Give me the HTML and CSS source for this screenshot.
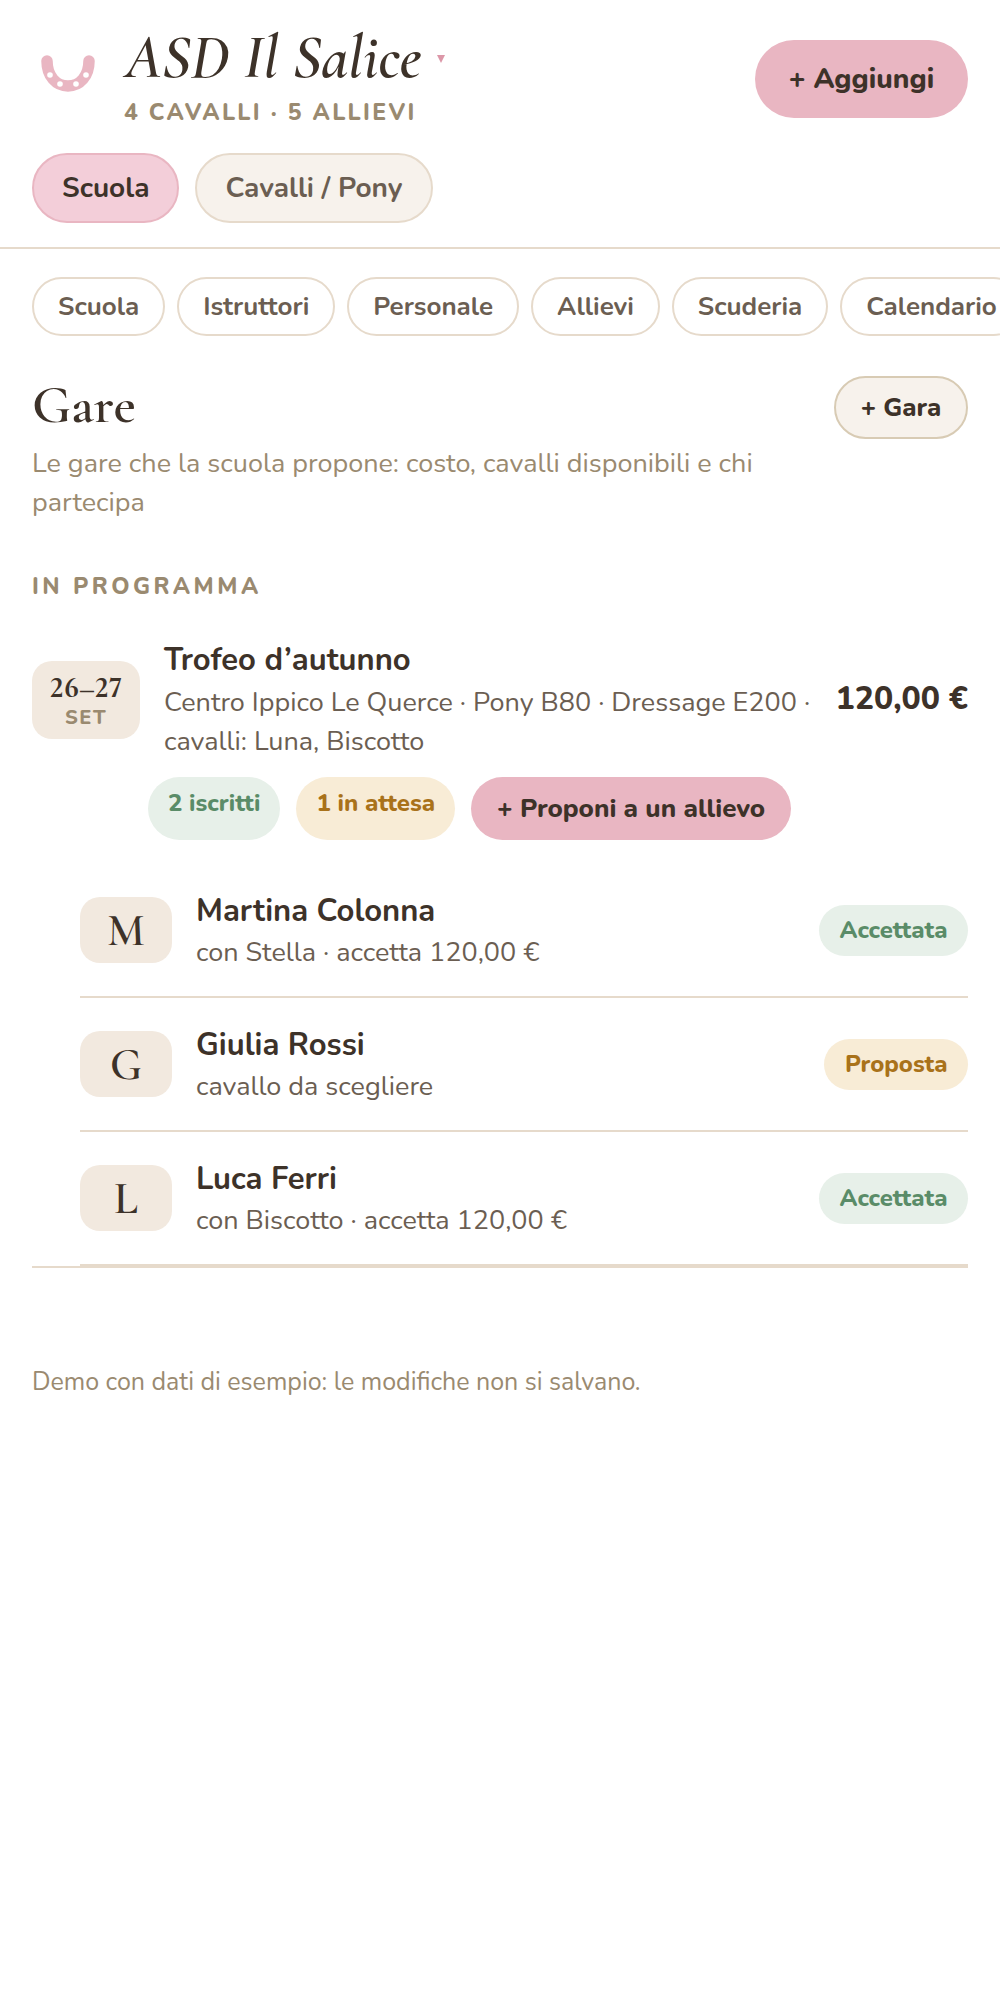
FILE: index.html
```html
<!DOCTYPE html>
<html lang="it">
<head>
<meta charset="utf-8">
<title>ASD Il Salice</title>
<link rel="stylesheet" href="styles.css">
</head>
<body>
<header class="top">
  <div class="top-row">
    <svg class="logo" viewBox="0 0 56 38" width="56" height="38" aria-hidden="true">
      <path class="shoe" d="M7 7 C7 22 16 32 28 32 C40 32 49 22 49 7" />
      <circle class="nail" cx="10" cy="21" r="2.800"/><circle class="nail" cx="20" cy="30" r="2.800"/><circle class="nail" cx="36" cy="30" r="2.800"/><circle class="nail" cx="46" cy="21" r="2.800"/>
    </svg>
    <div class="brand">
      <div class="brand-name"><span>ASD Il Salice</span><i class="caret"></i></div>
      <div class="brand-sub">4 CAVALLI · 5 ALLIEVI</div>
    </div>
    <button class="btn-add">+ Aggiungi</button>
  </div>
  <div class="modes">
    <span class="mode mode-on">Scuola</span>
    <span class="mode">Cavalli / Pony</span>
  </div>
</header>
<nav class="subnav">
  <span class="sub">Scuola</span><span class="sub">Istruttori</span><span class="sub">Personale</span><span class="sub">Allievi</span><span class="sub">Scuderia</span><span class="sub">Calendario</span>
</nav>
<main class="content">
  <section class="head">
    <div class="head-text">
      <h1>Gare</h1>
      <p>Le gare che la scuola propone: costo, cavalli disponibili e chi partecipa</p>
    </div>
    <button class="btn-gara">+ Gara</button>
  </section>
  <h2 class="eyebrow">IN PROGRAMMA</h2>
  <article class="race">
    <div class="race-top">
      <div class="date"><b>26–27</b><span>SET</span></div>
      <div class="race-info">
        <h3>Trofeo d’autunno</h3>
        <p>Centro Ippico Le Querce · Pony B80 · Dressage E200 · cavalli: Luna, Biscotto</p>
      </div>
      <div class="price">120,00 €</div>
    </div>
    <div class="chips">
      <span class="chip chip-green">2 iscritti</span>
      <span class="chip chip-amber">1 in attesa</span>
      <button class="chip-btn">+ Proponi a un allievo</button>
    </div>
    <ul class="people">
      <li class="person">
        <div class="avatar">M</div>
        <div class="person-info"><strong>Martina Colonna</strong><span>con Stella · accetta 120,00 €</span></div>
        <span class="tag tag-green">Accettata</span>
      </li>
      <li class="person">
        <div class="avatar">G</div>
        <div class="person-info"><strong>Giulia Rossi</strong><span>cavallo da scegliere</span></div>
        <span class="tag tag-amber">Proposta</span>
      </li>
      <li class="person">
        <div class="avatar">L</div>
        <div class="person-info"><strong>Luca Ferri</strong><span>con Biscotto · accetta 120,00 €</span></div>
        <span class="tag tag-green">Accettata</span>
      </li>
    </ul>
  </article>
  <p class="foot">Demo con dati di esempio: le modifiche non si salvano.</p>
</main>
</body>
</html>
```
FILE: styles.css
```css
* { box-sizing: border-box; }
html, body { margin: 0; padding: 0; background: #fff; }
body { width: 1000px; overflow-x: hidden; font-family: "Nunito", "Lato", "Noto Sans", sans-serif; color: #3d3229; }
button { font-family: inherit; border: 0; cursor: pointer; }
h1, h2, h3, p, ul { margin: 0; padding: 0; }

.top { padding: 28px 32px 24px; border-bottom: 2px solid #e6dacb; }
.top-row { display: flex; align-items: flex-start; }
.logo { margin: 26px 0 0 8px; flex: none; }
.shoe { fill: none; stroke: #e9b6c2; stroke-width: 11.500; stroke-linecap: round; }
.nail { fill: #fff; }
.brand { margin-left: 29px; flex: 1; }
.brand-name { font-family: "Cormorant Garamond", "EB Garamond", "Liberation Serif", serif; font-style: italic; font-weight: 600; font-size: 61.300px; line-height: 60px; display: flex; align-items: flex-start; }
.caret { width: 0; height: 0; border-left: 4px solid transparent; border-right: 4px solid transparent; border-top: 8px solid #dc97a8; margin: 27px 0 0 16px; }
.brand-sub { font-size: 23px; font-weight: 800; letter-spacing: 2.300px; color: #9a8a70; line-height: 30px; margin-top: 10px; margin-left: -1px; }
.btn-add { margin-top: 12px; width: 213px; height: 78px; border-radius: 39px; background: #e9b6c2; color: #3d3229; font-size: 28px; font-weight: 800; }
.modes { display: flex; gap: 16px; margin-top: 25px; }
.mode { height: 70px; padding: 0 28px; border-radius: 35px; border: 2px solid #e6dacb; background: #f7f2ec; color: #6b5e52; font-size: 28px; font-weight: 700; display: flex; align-items: center; }
.mode-on { background: #f3ced9; border-color: #e9b6c2; color: #3d3229; }

.subnav { display: flex; gap: 12px; padding: 28px 32px 0; overflow: hidden; }
.sub { flex: none; height: 59px; padding: 0 24px; border-radius: 30px; border: 2px solid #e6dacb; background: #fff; color: #6b5e52; font-size: 26px; font-weight: 700; display: flex; align-items: center; }

.content { padding: 0 32px; }
.head { display: flex; justify-content: space-between; align-items: flex-start; margin-top: 40px; }
.head-text { width: 760px; }
h1 { font-family: "Cormorant Garamond", "EB Garamond", "Liberation Serif", serif; font-weight: 600; font-size: 54px; line-height: 58px; }
.head-text p { font-size: 27px; line-height: 39px; color: #9a8a70; margin-top: 10px; }
.btn-gara { width: 134px; height: 63px; border-radius: 32px; background: #f7f2ec; border: 2px solid #d8cbb4; color: #3d3229; font-size: 25.600px; font-weight: 800; margin-top: 0; }
.eyebrow { font-size: 23px; font-weight: 800; letter-spacing: 3.500px; color: #9a8a70; line-height: 30px; margin-top: 50px; }

.race { margin-top: 38px; border-bottom: 2px solid #e6dacb; }
.race-top { display: flex; align-items: flex-start; }
.date { flex: none; width: 108px; height: 78px; margin-top: 21px; border-radius: 20px; background: #f2e9df; display: flex; flex-direction: column; align-items: center; justify-content: center; }
.date b { font-family: "Cormorant Garamond", "EB Garamond", "Liberation Serif", serif; font-weight: 700; font-size: 31px; line-height: 32px; font-variant-numeric: lining-nums; }
.date span { font-size: 20px; font-weight: 800; letter-spacing: 1.500px; color: #9a8a70; line-height: 24px; margin-top: 3px; }
.race-info { flex: 1; margin-left: 24px; }
.race-info h3 { font-size: 31px; font-weight: 700; line-height: 40px; }
.race-info p { font-size: 27px; line-height: 39px; color: #6b5e52; margin-top: 3px; max-width: 660px; }
.price { flex: none; margin-left: 16px; font-size: 32px; font-weight: 800; line-height: 40px; margin-top: 39px; }

.chips { display: flex; gap: 16px; margin: 16px 0 0 116px; }
.chip { border-radius: 32px; padding: 12px 20px; font-size: 24px; font-weight: 800; line-height: 28px; }
.chip-green { background: #e7f0e9; color: #5a8c68; }
.chip-amber { background: #f8ecd6; color: #a9721a; }
.chip-btn { height: 63px; border-radius: 32px; padding: 0 26px; background: #e9b6c2; color: #3d3229; font-size: 26px; font-weight: 800; }

.people { list-style: none; margin: 24px 0 0 48px; }
.person { display: flex; align-items: center; height: 134px; border-bottom: 2px solid #e6dacb; }
.avatar { flex: none; width: 92px; height: 66px; padding-top: 2px; border-radius: 20px; background: #f2e9df; font-family: "Cormorant Garamond", "EB Garamond", "Liberation Serif", serif; font-weight: 600; font-size: 44px; display: flex; align-items: center; justify-content: center; }
.person-info { flex: 1; margin-left: 24px; padding-top: 2px; display: flex; flex-direction: column; }
.person-info strong { font-size: 31px; font-weight: 700; line-height: 40px; }
.person-info span { font-size: 27px; line-height: 38px; color: #6b5e52; margin-top: 3px; }
.tag { flex: none; height: 51px; border-radius: 26px; padding: 0 20.500px; font-size: 23.900px; font-weight: 800; display: flex; align-items: center; }
.tag-green { background: #e7f0e9; color: #5a8c68; }
.tag-amber { background: #f8ecd6; color: #a9721a; }
.foot { font-size: 25px; line-height: 38px; color: #9a8a70; margin-top: 95px; }
```
